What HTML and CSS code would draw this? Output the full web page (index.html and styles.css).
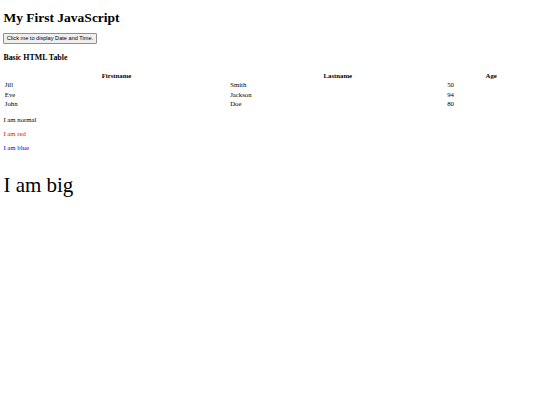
FILE: index.html
```html
<!DOCTYPE html>
<html>
<head>
<meta charset="utf-8">
<title>My First JavaScript</title>
<link rel="stylesheet" href="styles.css">
</head>
<body>
<h1 class="title">My First JavaScript</h1>
<div class="actions">
  <button class="btn" type="button">Click me to display Date and Time.</button>
</div>
<h3 class="subtitle">Basic HTML Table</h3>
<table class="people">
  <tr><th>Firstname</th><th>Lastname</th><th>Age</th></tr>
  <tr><td>Jill</td><td>Smith</td><td>50</td></tr>
  <tr><td>Eve</td><td>Jackson</td><td>94</td></tr>
  <tr><td>John</td><td>Doe</td><td>80</td></tr>
</table>
<p class="txt">I am normal</p>
<p class="txt red">I am red</p>
<p class="txt blue">I am blue</p>
<p class="big">I am big</p>
</body>
</html>
```
FILE: styles.css
```css
html { background: #fff; }
body {
  margin: 3.4px;
  font-family: "Liberation Serif", "Times New Roman", serif;
  font-size: 6.75px;
  color: #000;
}
.title {
  font-size: 13.5px;
  line-height: 16px;
  font-weight: bold;
  margin: 7px 0 7px;
}
.actions {
  display: flex;
}
.btn {
  font-family: "Liberation Sans", Arial, sans-serif;
  font-size: 5.625px;
  line-height: 6.5px;
  margin: 0;
  padding: 1px 2.4px;
  border: 1px solid #8f8f8f;
  border-radius: 1px;
  background: #efefef;
  color: #000;
}
.subtitle {
  font-size: 7.9px;
  line-height: 9px;
  font-weight: bold;
  margin: 9.3px 0 8.7px;
}
.people {
  width: 100%;
  border-spacing: 1px;
  margin-bottom: 6.6px;
}
.people th, .people td {
  padding: 0 0.4px;
  line-height: 8.33px;
}
.people th { font-weight: bold; text-align: center; }
.people td { text-align: left; }
.txt {
  line-height: 7.75px;
  margin: 6.5px 0;
}
.red { color: #ff0000; }
.blue { color: #0000ff; }
.big { font-size: 21px; margin: 1em 0; }
```
